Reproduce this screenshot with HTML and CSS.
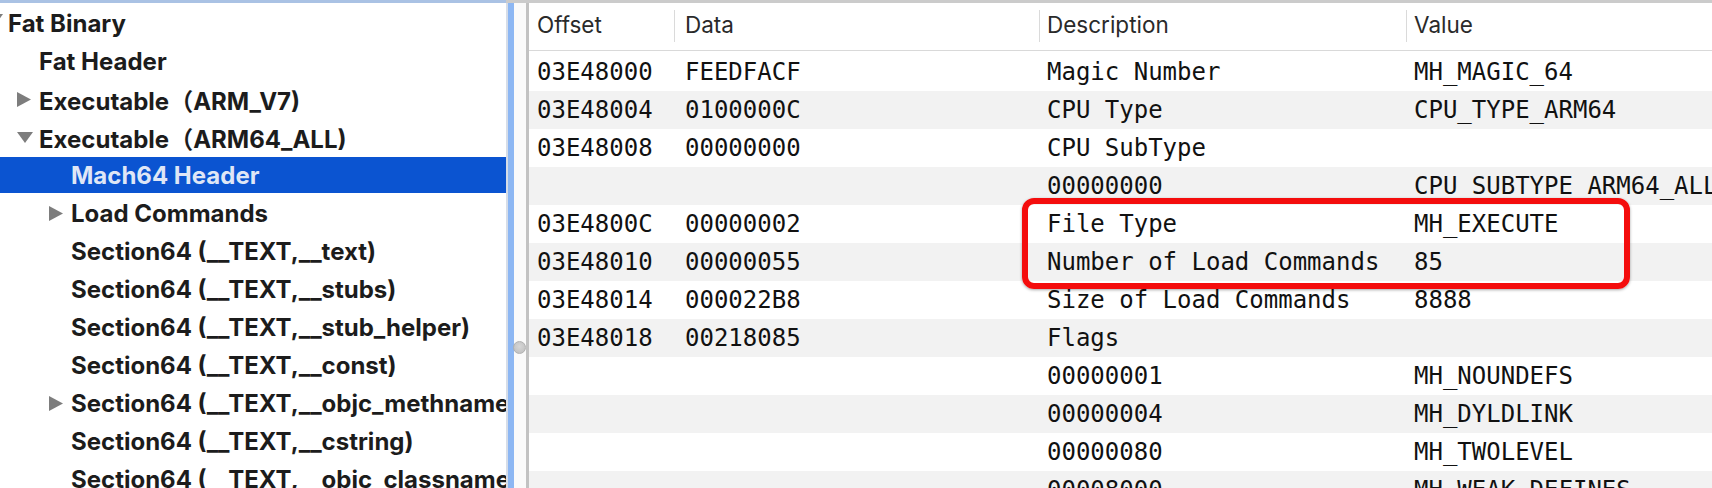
FILE: index.html
```html
<!DOCTYPE html>
<html>
<head>
<meta charset="utf-8">
<link rel="stylesheet" href="styles.css">
</head>
<body>
<div class="window">
  <div class="topbar"><div class="tb-left"></div><div class="tb-right"></div></div>
  <div class="main">
    <div class="tree">
      <div class="node l0"><svg class="tri down cut" viewBox="0 0 16 11"><polygon points="0,0 16,0 8,11"/></svg><span>Fat Binary</span></div>
      <div class="node l1"><span>Fat Header</span></div>
      <div class="node l1"><svg class="tri right" viewBox="0 0 14 15"><polygon points="0,0 14,7.5 0,15"/></svg><span>Executable（ARM_V7)</span></div>
      <div class="node l1"><svg class="tri down" viewBox="0 0 16 11"><polygon points="0,0 16,0 8,11"/></svg><span>Executable（ARM64_ALL)</span></div>
      <div class="node l2 selected"><span>Mach64 Header</span></div>
      <div class="node l2"><svg class="tri right" viewBox="0 0 14 15"><polygon points="0,0 14,7.5 0,15"/></svg><span>Load Commands</span></div>
      <div class="node l2"><span>Section64 (__TEXT,__text)</span></div>
      <div class="node l2"><span>Section64 (__TEXT,__stubs)</span></div>
      <div class="node l2"><span>Section64 (__TEXT,__stub_helper)</span></div>
      <div class="node l2"><span>Section64 (__TEXT,__const)</span></div>
      <div class="node l2"><svg class="tri right" viewBox="0 0 14 15"><polygon points="0,0 14,7.5 0,15"/></svg><span>Section64 (__TEXT,__objc_methname)</span></div>
      <div class="node l2"><span>Section64 (__TEXT,__cstring)</span></div>
      <div class="node l2"><span>Section64 (__TEXT,__objc_classname)</span></div>
    </div>
    <div class="splitter">
      <div class="sp-line"></div>
      <div class="sp-blue"></div>
      <div class="sp-gap"><span class="knob"></span></div>
      <div class="sp-edge"></div>
    </div>
    <div class="table">
      <div class="thead">
        <div class="th">Offset</div>
        <div class="th">Data</div>
        <div class="th">Description</div>
        <div class="th">Value</div>
      </div>
      <div class="tbody">
        <div class="tr"><div>03E48000</div><div>FEEDFACF</div><div>Magic Number</div><div>MH_MAGIC_64</div></div>
        <div class="tr alt"><div>03E48004</div><div>0100000C</div><div>CPU Type</div><div>CPU_TYPE_ARM64</div></div>
        <div class="tr"><div>03E48008</div><div>00000000</div><div>CPU SubType</div><div></div></div>
        <div class="tr alt"><div></div><div></div><div>00000000</div><div>CPU_SUBTYPE_ARM64_ALL</div></div>
        <div class="tr"><div>03E4800C</div><div>00000002</div><div>File Type</div><div>MH_EXECUTE</div></div>
        <div class="tr alt"><div>03E48010</div><div>00000055</div><div>Number of Load Commands</div><div>85</div></div>
        <div class="tr"><div>03E48014</div><div>000022B8</div><div>Size of Load Commands</div><div>8888</div></div>
        <div class="tr alt"><div>03E48018</div><div>00218085</div><div>Flags</div><div></div></div>
        <div class="tr"><div></div><div></div><div>00000001</div><div>MH_NOUNDEFS</div></div>
        <div class="tr alt"><div></div><div></div><div>00000004</div><div>MH_DYLDLINK</div></div>
        <div class="tr"><div></div><div></div><div>00000080</div><div>MH_TWOLEVEL</div></div>
        <div class="tr alt"><div></div><div></div><div>00008000</div><div>MH_WEAK_DEFINES</div></div>
      </div>
      <div class="highlight"></div>
    </div>
  </div>
</div>
</body>
</html>
```

FILE: styles.css
```css
html, body {
  margin: 0;
  padding: 0;
  background: #ffffff;
  overflow: hidden;
}
.window {
  width: 1712px;
  height: 488px;
  display: flex;
  flex-direction: column;
  overflow: hidden;
}
.topbar {
  height: 3px;
  display: flex;
  flex: none;
}
.tb-left {
  width: 506px;
  background: #aac2e4;
}
.tb-right {
  flex: 1;
  background: #cbcbcb;
}
.main {
  flex: 1;
  display: flex;
  min-height: 0;
}
.tree {
  width: 506px;
  flex: none;
  padding-top: 2px;
  overflow: hidden;
  background: #ffffff;
  font-family: "Inter", "Liberation Sans", "Noto Sans CJK SC", sans-serif;
  font-weight: bold;
  font-size: 24px;
  color: #1c1c1c;
}
.node {
  height: 36px;
  margin-bottom: 2px;
  display: flex;
  align-items: center;
  position: relative;
  white-space: nowrap;
}
.node span {
  display: block;
  padding-top: 1px;
}
.node.l0 { padding-left: 8px; }
.node.l1 { padding-left: 39px; }
.node.l2 { padding-left: 71px; }
.node.selected {
  background: #0b54d1;
  color: #dfe6f6;
}
.tri {
  position: absolute;
  fill: #7d7d7d;
}
.tri.right {
  width: 14px;
  height: 15px;
  margin-left: -22px;
  top: 11px;
}
.tri.down {
  width: 16px;
  height: 11px;
  margin-left: -22px;
  top: 13px;
}
.tri.cut {
  margin-left: -21px;
  top: 9px;
}
.splitter {
  width: 23px;
  flex: none;
  display: flex;
  position: relative;
}
.sp-line {
  width: 2px;
  background: #d6dde8;
}
.sp-blue {
  width: 6px;
  background: #8db7f3;
}
.sp-gap {
  flex: 1;
  background: #fafafa;
}
.sp-edge {
  width: 3px;
  background: #c2c2c2;
}
.knob {
  position: absolute;
  left: 7px;
  top: 338px;
  width: 11px;
  height: 11px;
  border-radius: 50%;
  background: radial-gradient(circle at 50% 40%, #d6d6d6, #bdbdbd);
  border: 0.5px solid #b0b0b0;
}
.table {
  flex: 1;
  position: relative;
  overflow: hidden;
  background: #ffffff;
}
.thead {
  display: grid;
  grid-template-columns: 145px 365px 367px 1fr;
  height: 48px;
  border-bottom: 1px solid #d9d9d9;
  box-sizing: border-box;
  font-family: "Inter", "Liberation Sans", sans-serif;
  font-size: 22.5px;
  color: #2a2a2a;
}
.th {
  padding-left: 8px;
  display: flex;
  align-items: center;
  padding-bottom: 4px;
  position: relative;
}
.th + .th::before {
  content: "";
  position: absolute;
  left: 0;
  top: 7px;
  bottom: 8px;
  width: 1px;
  background: #dadada;
}
.th:nth-child(2) { padding-left: 11px; }
.tbody {
  padding-top: 2px;
  font-family: "DejaVu Sans Mono", "Liberation Mono", monospace;
  font-size: 24px;
  color: #111111;
}
.tr {
  display: grid;
  grid-template-columns: 145px 365px 367px 1fr;
  height: 38px;
  align-items: center;
  white-space: nowrap;
}
.tr.alt {
  background: #f2f2f2;
}
.tr > div {
  padding-left: 8px;
}
.tr > div:nth-child(2) { padding-left: 11px; }
.highlight {
  position: absolute;
  left: 493px;
  top: 195px;
  width: 608px;
  height: 91px;
  box-sizing: border-box;
  border: 6px solid #f40d0d;
  border-radius: 12px;
  box-shadow: 0 1px 3px rgba(0, 0, 0, 0.35);
}
```
